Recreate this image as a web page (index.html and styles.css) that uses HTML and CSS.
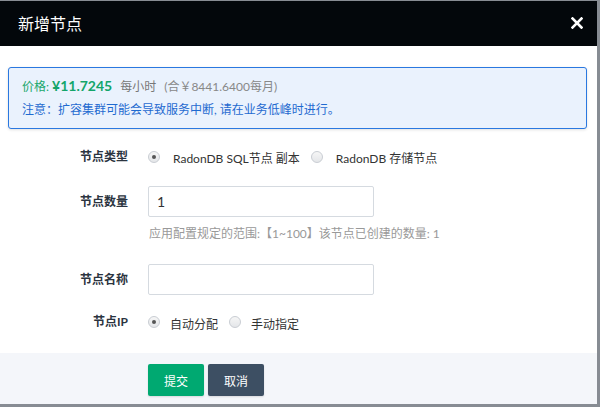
FILE: index.html
```html
<!DOCTYPE html>
<html lang="zh">
<head>
<meta charset="utf-8">
<link rel="stylesheet" href="styles.css">
</head>
<body>
<div class="modal">
  <div class="modal-header">
    <span class="modal-title">新增节点</span>
    <svg class="modal-close" width="12" height="12" viewBox="0 0 12 12"><path d="M1.5 1.5 L10.5 10.5 M10.5 1.5 L1.5 10.5" stroke="#fff" stroke-width="2.6" stroke-linecap="square"/></svg>
  </div>
  <div class="modal-body">
    <div class="alert">
      <div class="alert-line price-line">
        <span class="price-label">价格:</span>
        <span class="price-value">¥11.7245</span>
        <span class="price-unit">每小时</span>
        <span class="price-month">(合￥8441.6400每月)</span>
      </div>
      <div class="alert-line notice">注意：扩容集群可能会导致服务中断, 请在业务低峰时进行。</div>
    </div>

    <div class="form">
      <div class="row row-type">
        <div class="label">节点类型</div>
        <div class="field radios">
          <label class="radio"><span class="dot checked"></span><span class="radio-text">RadonDB SQL节点 副本</span></label>
          <label class="radio"><span class="dot"></span><span class="radio-text">RadonDB 存储节点</span></label>
        </div>
      </div>
      <div class="row row-count">
        <div class="label">节点数量</div>
        <div class="field"><div class="input">1</div></div>
      </div>
      <div class="help">应用配置规定的范围:【1~100】该节点已创建的数量: 1</div>
      <div class="row row-name">
        <div class="label">节点名称</div>
        <div class="field"><div class="input"></div></div>
      </div>
      <div class="row row-ip">
        <div class="label">节点IP</div>
        <div class="field radios">
          <label class="radio"><span class="dot checked"></span><span class="radio-text">自动分配</span></label>
          <label class="radio"><span class="dot"></span><span class="radio-text">手动指定</span></label>
        </div>
      </div>
    </div>
  </div>
  <div class="modal-footer">
    <button class="btn btn-primary">提交</button>
    <button class="btn btn-dark">取消</button>
  </div>
</div>
</body>
</html>
```
FILE: styles.css
```css
html, body {
  margin: 0;
  padding: 0;
}
body {
  background: #878c93;
  width: 600px;
  height: 407px;
  overflow: hidden;
  font-family: Lato, "Noto Sans CJK SC", sans-serif;
  font-size: 12px;
  color: #333;
}
.modal {
  margin-top: 1px;
  width: 597px;
  height: 403px;
  background: #fff;
  display: flex;
  flex-direction: column;
}
.modal-header {
  height: 45px;
  background: #03070b;
  color: #fff;
  display: flex;
  align-items: center;
  justify-content: space-between;
  padding: 0 14px 0 18px;
  flex: none;
}
.modal-title {
  font-family: "Noto Sans CJK SC", sans-serif;
  font-size: 16px;
  line-height: 20px;
  margin-top: -2px;
}
.modal-close {
  display: block;
  margin-top: -1px;
}
.modal-body {
  flex: 1;
  padding-top: 21px;
}
.alert {
  margin: 0 10px 0 8px;
  height: 60px;
  border: 1px solid #2a78e0;
  border-radius: 3px;
  background: #eaf2fd;
  box-shadow: 0 1px 3px rgba(0, 0, 0, 0.12);
  padding: 0 13px;
  display: flex;
  flex-direction: column;
  justify-content: center;
  gap: 5px;
}
.alert-line {
  display: flex;
  align-items: baseline;
  line-height: 18px;
  white-space: nowrap;
}
.price-label {
  color: #1aa86c;
  font-size: 12px;
}
.price-value {
  color: #13a56a;
  font-weight: bold;
  font-size: 14px;
  margin-left: 3px;
}
.price-unit {
  color: #777;
  margin-left: 8px;
}
.price-month {
  color: #888;
  margin-left: 8px;
}
.notice {
  color: #1f6ad0;
  font-size: 12px;
}
.form {
  display: flex;
  flex-direction: column;
}
.row {
  display: flex;
  align-items: center;
}
.label {
  width: 128px;
  text-align: right;
  font-weight: bold;
  color: #2b3440;
  flex: none;
  line-height: 20px;
}
.field {
  margin-left: 20px;
}
.row-type {
  margin-top: 18px;
  height: 20px;
}
.row-count {
  margin-top: 19px;
}
.row-name {
  margin-top: 21px;
}
.row-ip {
  margin-top: 17px;
  height: 20px;
}
.input {
  height: 29px;
  border: 1px solid #d5dae0;
  border-radius: 2px;
  box-sizing: content-box;
  padding: 0 0 0 8px;
  line-height: 29px;
  font-size: 14px;
  color: #333;
  width: 216px;
}
.help {
  margin: 8px 0 0 149px;
  color: #999;
  line-height: 18px;
  white-space: nowrap;
}
.radios {
  display: flex;
  align-items: center;
}
.radio {
  display: flex;
  align-items: center;
  margin-right: 11px;
}
.dot {
  width: 10px;
  height: 10px;
  border: 1px solid #c9cdd3;
  border-radius: 50%;
  background: linear-gradient(#f6f6f6, #e4e6e9);
  position: relative;
  flex: none;
}
.dot.checked::after {
  content: "";
  position: absolute;
  left: 3px;
  top: 3px;
  width: 4px;
  height: 4px;
  border-radius: 50%;
  background: #555;
}
.radio-text {
  margin-left: 13px;
  color: #333;
  white-space: nowrap;
}
.row-ip .radio-text {
  margin-left: 10px;
  margin-top: 3px;
}
.modal-footer {
  flex: none;
  height: 51px;
  background: #f4f6fa;
  box-sizing: border-box;
  padding: 11px 0 0 148px;
  display: flex;
  align-items: flex-start;
  gap: 4px;
}
.btn {
  width: 56px;
  height: 32px;
  border: none;
  border-radius: 2px;
  color: #fff;
  font-family: "Noto Sans CJK SC", sans-serif;
  font-size: 12px;
  padding: 0;
  box-shadow: 0 1px 2px rgba(0, 0, 0, 0.12);
}
.btn-primary {
  background: #00a971;
}
.btn-dark {
  background: #3d4f63;
}
```
